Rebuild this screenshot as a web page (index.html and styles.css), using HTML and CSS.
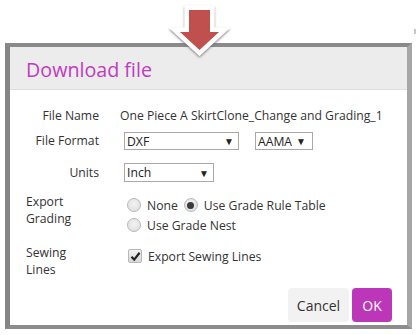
FILE: index.html
```html
<!DOCTYPE html>
<html lang="en">
<head>
    <meta charset="UTF-8">
    <title>Download file</title>
    <link rel="stylesheet" href="styles.css">
</head>
<body>
    <div class="screen">
        <span class="edge-mark"></span>

        <!-- Flecha roja encima del diálogo -->
        <svg class="arrow" width="70" height="66" viewBox="0 0 70 66">
            <defs>
                <filter id="glow" x="-30%" y="-30%" width="160%" height="160%">
                    <feDropShadow dx="0" dy="1.5" stdDeviation="1.2" flood-color="#6e6e6e" flood-opacity="0.8"/>
                </filter>
            </defs>
            <path d="M23 10 H44 V32 H53 L33.5 50 L14 32 H23 Z" fill="#fff" stroke="#fff" stroke-width="9" stroke-linejoin="miter" filter="url(#glow)"/>
            <path d="M23 10 H44 V32 H53 L33.5 50 L14 32 H23 Z" fill="#c0504d"/>
        </svg>

        <div class="dialog">
            <div class="dialog-head">
                <h1>Download file</h1>
            </div>
            <div class="dialog-body">
                <div class="row row-name">
                    <div class="label">File Name</div>
                    <div class="value">One Piece A SkirtClone_Change and Grading_1</div>
                </div>
                <div class="row row-format">
                    <div class="label">File Format</div>
                    <div class="select select-format"><span>DXF</span><i>▼</i></div>
                    <div class="select select-type"><span>AAMA</span><i>▼</i></div>
                </div>
                <div class="row row-units">
                    <div class="label">Units</div>
                    <div class="select select-units"><span>Inch</span><i>▼</i></div>
                </div>
                <div class="row row-multi">
                    <div class="label label-left">Export<br>Grading</div>
                    <div class="options">
                        <div class="option-line">
                            <span class="radio"></span><span class="opt-text">None</span>
                            <span class="radio checked"></span><span class="opt-text">Use Grade Rule Table</span>
                        </div>
                        <div class="option-line">
                            <span class="radio"></span><span class="opt-text">Use Grade Nest</span>
                        </div>
                    </div>
                </div>
                <div class="row row-multi row-sewing">
                    <div class="label label-left">Sewing<br>Lines</div>
                    <div class="options">
                        <div class="option-line">
                            <span class="checkbox">
                                <svg width="11" height="11" viewBox="0 0 11 11"><path d="M1.5 5.8 L4.2 8.6 L9.6 1.8" fill="none" stroke="#222" stroke-width="2.2"/></svg>
                            </span><span class="opt-text">Export Sewing Lines</span>
                        </div>
                    </div>
                </div>
                <div class="actions">
                    <button class="btn btn-cancel">Cancel</button>
                    <button class="btn btn-ok">OK</button>
                </div>
            </div>
        </div>
    </div>
</body>
</html>
```

FILE: styles.css
```css
body {
    margin: 0;
    background: #fff;
    font-family: 'Open Sans', 'Noto Sans', sans-serif;
    color: #333;
}
.screen {
    position: relative;
    width: 417px;
    height: 335px;
    padding-top: 43px;
    box-sizing: border-box;
    overflow: hidden;
}
.edge-mark {
    position: absolute;
    left: 414px;
    top: 29px;
    width: 2px;
    height: 5px;
    background: #c8c8c8;
}
.arrow {
    position: absolute;
    left: 166px;
    top: 0;
    z-index: 2;
}
.dialog {
    margin-left: 5px;
    width: 407px;
    height: 286px;
    box-sizing: border-box;
    border-style: solid;
    border-width: 4px 5px 4px 5px;
    border-color: #8a8a8a #a6a6a6 #8c8c8c #858585;
    background: #fff;
    display: flex;
    flex-direction: column;
}
.dialog-head {
    height: 42px;
    background: #ececec;
    border-bottom: 1px solid #dedede;
    display: flex;
    align-items: center;
    padding-left: 16px;
}
h1 {
    margin: 0;
    font-size: 19.7px;
    font-weight: normal;
    color: #c13bbf;
    padding-top: 2px;
}
.dialog-body {
    flex: 1;
    display: flex;
    flex-direction: column;
    padding: 17px 15px 3px 16px;
    font-size: 12.2px;
}
.row {
    display: flex;
    align-items: center;
}
.label {
    width: 73px;
    margin-right: 21px;
    text-align: right;
    line-height: 18px;
    flex-shrink: 0;
}
.label-left {
    text-align: left;
    line-height: 16.5px;
}
.value {
    line-height: 18px;
    white-space: nowrap;
}
.row-format {
    margin-top: 7px;
}
.row-units {
    margin-top: 13px;
}
.select {
    height: 18px;
    box-sizing: border-box;
    border: 1px solid #a9a9a9;
    background: #fff;
    display: flex;
    align-items: center;
    justify-content: space-between;
    padding: 0 4px 0 2px;
    margin-left: 4px;
    color: #222;
}
.select i {
    font-style: normal;
    font-size: 10px;
    color: #222;
}
.select-format {
    width: 115px;
}
.select-type {
    width: 58px;
    margin-left: 16px;
    justify-content: flex-start;
}
.select-type i {
    margin-left: 4px;
}
.select-units {
    width: 90px;
    height: 19px;
}
.row-multi {
    align-items: flex-start;
    margin-top: 12px;
}
.row-sewing {
    margin-top: 10px;
}
.options {
    padding-top: 1px;
    margin-left: 7px;
}
.option-line {
    height: 20px;
    display: flex;
    align-items: center;
}
.opt-text {
    margin-left: 6px;
    margin-right: 6px;
}
.radio {
    width: 14px;
    height: 14px;
    box-sizing: border-box;
    border-radius: 50%;
    border: 1px solid #b8b8b8;
    background: radial-gradient(circle at 50% 40%, #f2f2f2 0%, #dcdcdc 100%);
    display: flex;
    align-items: center;
    justify-content: center;
}
.radio.checked::after {
    content: '';
    width: 7px;
    height: 7px;
    border-radius: 50%;
    background: #3a3a3a;
}
.checkbox {
    width: 14px;
    height: 14px;
    margin-left: 1px;
    box-sizing: border-box;
    border: 1px solid #b8b8b8;
    border-radius: 2px;
    background: linear-gradient(#f0f0f0, #d8d8d8);
    display: flex;
    align-items: center;
    justify-content: center;
}
.actions {
    margin-top: auto;
    display: flex;
    justify-content: flex-end;
    gap: 3px;
}
.btn {
    height: 34px;
    border: none;
    border-radius: 4px;
    font-family: inherit;
    font-size: 14px;
    cursor: pointer;
}
.btn-cancel {
    width: 61px;
    background: #f2f2f2;
    color: #333;
}
.btn-ok {
    width: 40px;
    background: #bb36b9;
    color: #fff;
}
```
